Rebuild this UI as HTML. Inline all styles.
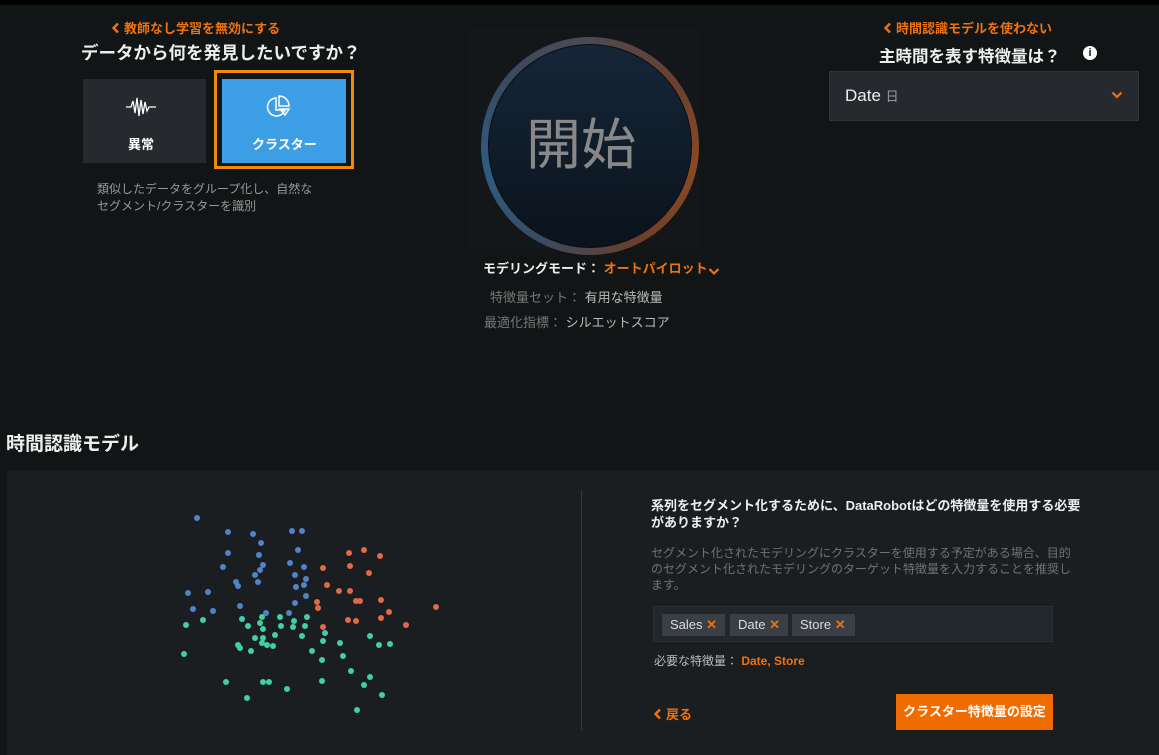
<!DOCTYPE html>
<html><head><meta charset="utf-8"><style>
*{margin:0;padding:0;box-sizing:border-box}
body{width:1159px;height:755px;background:#111516;font-family:"Liberation Sans","Noto Sans CJK JP",sans-serif;color:#fff;position:relative;overflow:hidden}
.a{position:absolute;white-space:nowrap}
.or{color:#f0720f}
.chev{display:inline-block;vertical-align:middle}
</style></head><body>
<div class="a" style="left:0;top:0;width:1159px;height:5px;background:#000"></div>
<div class="a or" style="left:111px;top:18px;font-size:13px;font-weight:bold"><svg class="chev" width="10" height="12" viewBox="0 0 10 12" style="margin-right:3px;margin-top:-3px"><path d="M7 1.5 2.5 6 7 10.5" fill="none" stroke="#f0720f" stroke-width="2.4"/></svg>教師なし学習を無効にする</div>
<div class="a" style="left:81px;top:40px;font-size:17.5px;font-weight:bold;color:#eee">データから何を発見したいですか？</div>
<div class="a" style="left:83px;top:79px;width:123px;height:84px;background:#262a2f"></div>
<svg class="a" style="left:126px;top:95px" width="30" height="24" viewBox="0 0 30 24"><path d="M0 12H5L7 6 9 18 11 3 13 21 15 5 17 19 19 7 21 16 23 12H30" fill="none" stroke="#fff" stroke-width="1.3"/></svg>
<div class="a" style="left:128px;top:134px;font-size:13px;font-weight:bold">異常</div>
<div class="a" style="left:214px;top:70px;width:140px;height:99px;border:3px solid #f08c0a"></div>
<div class="a" style="left:222px;top:79px;width:124px;height:84px;background:#3c9ee5"></div>
<svg class="a" style="left:266px;top:95px" width="26" height="24" viewBox="0 0 26 24"><g fill="none" stroke="#fff" stroke-width="1.5"><path d="M10 3A9 9 0 1 0 19 15H10Z"/><path d="M13 1V11H23A10 10 0 0 0 13 1Z"/><path d="M14 14H23L19 20Z"/></g></svg>
<div class="a" style="left:252px;top:134px;font-size:13px;font-weight:bold">クラスター</div>
<div class="a" style="left:97px;top:181px;font-size:12px;color:#999;line-height:17px">類似したデータをグループ化し、自然な<br>セグメント/クラスターを識別</div>

<div class="a" style="left:468px;top:30px;width:232px;height:218px;background:#13171a"></div>
<div class="a" style="left:481px;top:37px;width:218px;height:218px;border-radius:50%;background:conic-gradient(from 0deg,#4a4b52,#6a4030,#8a4a22,#6a3e2a,#3a4a60,#2e5b82,#3a4a60,#4a4b52)"></div>
<div class="a" style="left:488px;top:44px;width:204px;height:204px;border-radius:50%;background:linear-gradient(#152638,#0b131c);border:1px solid #0a0d10"></div>
<div class="a" style="left:526px;top:100px;font-size:55px;color:#888">開始</div>
<div class="a" style="left:483px;top:258px;font-size:13px;font-weight:bold;color:#eee">モデリングモード： <span class="or">オートパイロット</span><svg class="chev" width="12" height="10" viewBox="0 0 12 10" style="margin-top:2px"><path d="M1.5 3 6 7.5 10.5 3" fill="none" stroke="#f0720f" stroke-width="2.2"/></svg></div>
<div class="a" style="left:490px;top:287px;font-size:13px;color:#777">特徴量セット： <span style="color:#bbb">有用な特徴量</span></div>
<div class="a" style="left:484px;top:312px;font-size:13px;color:#777">最適化指標： <span style="color:#bbb">シルエットスコア</span></div>

<div class="a or" style="left:883px;top:18px;font-size:13px;font-weight:bold"><svg class="chev" width="10" height="12" viewBox="0 0 10 12" style="margin-right:3px;margin-top:-3px"><path d="M7 1.5 2.5 6 7 10.5" fill="none" stroke="#f0720f" stroke-width="2.4"/></svg>時間認識モデルを使わない</div>
<div class="a" style="left:879px;top:43px;font-size:16.5px;font-weight:bold;color:#eee">主時間を表す特徴量は？</div>
<div class="a" style="left:1083px;top:46px;width:14px;height:14px;border-radius:50%;background:#fff;color:#111;font-size:11px;font-weight:bold;text-align:center;line-height:14px">i</div>
<div class="a" style="left:829px;top:71px;width:310px;height:50px;background:#262a2f;border:1px solid #30343a"></div>
<div class="a" style="left:845px;top:86px;font-size:17px;color:#eee">Date <span style="font-size:13px;color:#999">日</span></div>
<svg class="a" style="left:1111px;top:90px" width="12" height="10" viewBox="0 0 12 10"><path d="M1.5 2.5 6 7 10.5 2.5" fill="none" stroke="#f0720f" stroke-width="2.2"/></svg>

<div class="a" style="left:6px;top:429px;font-size:19px;font-weight:bold;color:#eee">時間認識モデル</div>
<div class="a" style="left:7px;top:470px;width:1152px;height:285px;background:#1a1e21"></div>
<div class="a" style="left:581px;top:490px;width:1px;height:240px;background:#33383d"></div>
<svg class="a" style="left:0;top:0" width="500" height="755">
<g fill="#5183c9"><circle cx="197" cy="518" r="3"/><circle cx="228" cy="532" r="3"/><circle cx="253" cy="534" r="3"/><circle cx="261" cy="543" r="3"/><circle cx="292" cy="531" r="3"/><circle cx="302" cy="531" r="3"/><circle cx="228" cy="553" r="3"/><circle cx="259" cy="555" r="3"/><circle cx="298" cy="550" r="3"/><circle cx="223" cy="567" r="3"/><circle cx="263" cy="565" r="3"/><circle cx="260" cy="570" r="3"/><circle cx="255" cy="575" r="3"/><circle cx="290" cy="563" r="3"/><circle cx="304" cy="567" r="3"/><circle cx="295" cy="575" r="3"/><circle cx="306" cy="579" r="3"/><circle cx="236" cy="582" r="3"/><circle cx="238" cy="586" r="3"/><circle cx="258" cy="582" r="3"/><circle cx="296" cy="587" r="3"/><circle cx="304" cy="585" r="3"/><circle cx="188" cy="593" r="3"/><circle cx="208" cy="592" r="3"/><circle cx="306" cy="596" r="3"/><circle cx="295" cy="603" r="3"/><circle cx="240" cy="606" r="3"/><circle cx="193" cy="609" r="3"/><circle cx="213" cy="611" r="3"/><circle cx="266" cy="613" r="3"/><circle cx="289" cy="613" r="3"/></g>
<g fill="#e06a45"><circle cx="349" cy="553" r="3"/><circle cx="364" cy="550" r="3"/><circle cx="380" cy="556" r="3"/><circle cx="323" cy="568" r="3"/><circle cx="350" cy="566" r="3"/><circle cx="369" cy="573" r="3"/><circle cx="327" cy="585" r="3"/><circle cx="339" cy="591" r="3"/><circle cx="350" cy="591" r="3"/><circle cx="317" cy="602" r="3"/><circle cx="318" cy="608" r="3"/><circle cx="356" cy="601" r="3"/><circle cx="360" cy="601" r="3"/><circle cx="381" cy="600" r="3"/><circle cx="436" cy="607" r="3"/><circle cx="389" cy="612" r="3"/><circle cx="348" cy="620" r="3"/><circle cx="356" cy="621" r="3"/><circle cx="381" cy="618" r="3"/><circle cx="406" cy="625" r="3"/><circle cx="323" cy="627" r="3"/></g>
<g fill="#40cfa5"><circle cx="242" cy="619" r="3"/><circle cx="262" cy="617" r="3"/><circle cx="280" cy="617" r="3"/><circle cx="307" cy="617" r="3"/><circle cx="203" cy="620" r="3"/><circle cx="186" cy="625" r="3"/><circle cx="248" cy="626" r="3"/><circle cx="260" cy="623" r="3"/><circle cx="294" cy="621" r="3"/><circle cx="281" cy="626" r="3"/><circle cx="293" cy="627" r="3"/><circle cx="305" cy="626" r="3"/><circle cx="263" cy="629" r="3"/><circle cx="325" cy="633" r="3"/><circle cx="275" cy="635" r="3"/><circle cx="255" cy="638" r="3"/><circle cx="263" cy="638" r="3"/><circle cx="302" cy="636" r="3"/><circle cx="370" cy="636" r="3"/><circle cx="323" cy="641" r="3"/><circle cx="340" cy="643" r="3"/><circle cx="262" cy="643" r="3"/><circle cx="267" cy="645" r="3"/><circle cx="273" cy="646" r="3"/><circle cx="238" cy="645" r="3"/><circle cx="240" cy="648" r="3"/><circle cx="251" cy="651" r="3"/><circle cx="379" cy="645" r="3"/><circle cx="390" cy="644" r="3"/><circle cx="184" cy="654" r="3"/><circle cx="312" cy="651" r="3"/><circle cx="343" cy="656" r="3"/><circle cx="322" cy="660" r="3"/><circle cx="351" cy="671" r="3"/><circle cx="370" cy="677" r="3"/><circle cx="226" cy="682" r="3"/><circle cx="263" cy="682" r="3"/><circle cx="269" cy="682" r="3"/><circle cx="322" cy="681" r="3"/><circle cx="364" cy="685" r="3"/><circle cx="287" cy="689" r="3"/><circle cx="382" cy="695" r="3"/><circle cx="247" cy="698" r="3"/><circle cx="357" cy="710" r="3"/></g>
</svg>

<div class="a" style="left:651px;top:497px;font-size:13px;font-weight:bold;line-height:17px;color:#eee">系列をセグメント化するために、DataRobotはどの特徴量を使用する必要<br>がありますか？</div>
<div class="a" style="left:651px;top:545px;font-size:12px;line-height:16px;color:#6e7378">セグメント化されたモデリングにクラスターを使用する予定がある場合、目的<br>のセグメント化されたモデリングのターゲット特徴量を入力することを推奨し<br>ます。</div>
<div class="a" style="left:653px;top:606px;width:400px;height:36px;background:#22272b;border:1px solid #2c3136"></div>
<div class="a" style="left:662px;top:614px;width:63px;height:22px;background:#3a3f45;font-size:13px;line-height:22px;padding-left:8px;color:#ddd">Sales <b class="or">✕</b></div>
<div class="a" style="left:730px;top:614px;width:58px;height:22px;background:#3a3f45;font-size:13px;line-height:22px;padding-left:8px;color:#ddd">Date <b class="or">✕</b></div>
<div class="a" style="left:792px;top:614px;width:63px;height:22px;background:#3a3f45;font-size:13px;line-height:22px;padding-left:8px;color:#ddd">Store <b class="or">✕</b></div>
<div class="a" style="left:654px;top:652px;font-size:12px;color:#bbb">必要な特徴量： <b class="or">Date, Store</b></div>
<div class="a or" style="left:653px;top:704px;font-size:13px;font-weight:bold"><svg class="chev" width="10" height="12" viewBox="0 0 10 12" style="margin-right:3px;margin-top:-3px"><path d="M7 1.5 2.5 6 7 10.5" fill="none" stroke="#f0720f" stroke-width="2.4"/></svg>戻る</div>
<div class="a" style="left:896px;top:694px;width:157px;height:36px;background:#f06c00;font-size:13px;font-weight:bold;line-height:36px;text-align:center;color:#fff">クラスター特徴量の設定</div>
</body></html>
